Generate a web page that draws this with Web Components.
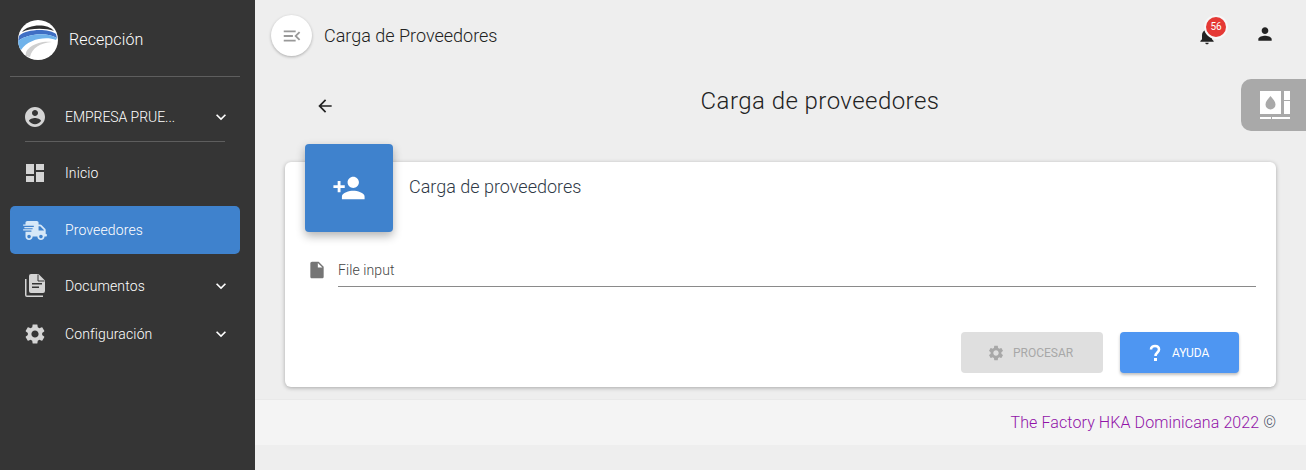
<!DOCTYPE html>
<html lang="es"><head><meta charset="utf-8"><title>Carga de Proveedores</title>
<style>
html,body{margin:0;padding:0;height:470px;overflow:hidden}
body{font-family:Roboto,"Liberation Sans",sans-serif;font-weight:300;background:#eee;color:#222}
</style></head><body>
<app-shell>
  <side-bar slot="side">
    <nav-item icon="account" chevron tight label="EMPRESA PRUE..."></nav-item>
    <hr-line></hr-line>
    <nav-item icon="dashboard" label="Inicio"></nav-item>
    <nav-item icon="truck" active label="Proveedores"></nav-item>
    <nav-item icon="docs" chevron label="Documentos"></nav-item>
    <nav-item icon="gear" chevron label="Configuración"></nav-item>
  </side-bar>
  <top-bar slot="main"></top-bar>
  <page-head slot="main"></page-head>
  <upload-card slot="main"></upload-card>
  <app-footer slot="main"></app-footer>
  <side-tab slot="main"></side-tab>
</app-shell>
<script>
const P={
account:'<path d="M12 2C6.48 2 2 6.48 2 12s4.48 10 10 10 10-4.48 10-10S17.52 2 12 2zm0 3c1.66 0 3 1.34 3 3s-1.34 3-3 3-3-1.34-3-3 1.34-3 3-3zm0 14.2c-2.5 0-4.71-1.28-6-3.22.03-1.99 4-3.08 6-3.08 1.99 0 5.97 1.09 6 3.08-1.29 1.94-3.5 3.22-6 3.22z"/>',
dashboard:'<path d="M3 13h8V3H3v10zm0 8h8v-6H3v6zm10 0h8V11h-8v10zm0-18v6h8V3h-8z"/>',
gear:'<path d="M19.14 12.94c.04-.3.06-.61.06-.94 0-.32-.02-.64-.07-.94l2.03-1.58c.18-.14.23-.41.12-.61l-1.92-3.32c-.12-.22-.37-.29-.59-.22l-2.39.96c-.5-.38-1.03-.7-1.62-.94l-.36-2.54c-.04-.24-.24-.41-.48-.41h-3.84c-.24 0-.43.17-.47.41l-.36 2.54c-.59.24-1.13.57-1.62.94l-2.39-.96c-.22-.08-.47 0-.59.22L2.74 8.87c-.12.21-.08.47.12.61l2.03 1.58c-.05.3-.09.63-.09.94s.02.64.07.94l-2.03 1.58c-.18.14-.23.41-.12.61l1.92 3.32c.12.22.37.29.59.22l2.39-.96c.5.38 1.03.7 1.62.94l.36 2.54c.05.24.24.41.48.41h3.84c.24 0 .44-.17.47-.41l.36-2.54c.59-.24 1.13-.56 1.62-.94l2.39.96c.22.08.47 0 .59-.22l1.92-3.32c.12-.22.07-.47-.12-.61l-2.01-1.58zM12 15.600c-1.98 0-3.6-1.62-3.6-3.6s1.62-3.6 3.6-3.6 3.6 1.62 3.6 3.6-1.62 3.6-3.6 3.6z"/>',
chev:'<path d="M16.59 8.59L12 13.17 7.41 8.59 6 10l6 6 6-6z"/>',
menu:'<path d="M3 18h13v-2H3v2zm0-5h10v-2H3v2zm0-7v2h13V6H3zm18 9.590L17.42 12 21 8.410 19.590 7l-5 5 5 5L21 15.590z"/>',
back:'<path d="M20 11H7.830l5.590-5.590L12 4l-8 8 8 8 1.410-1.410L7.830 13H20v-2z"/>',
bell:'<path d="M12 22c1.100 0 2-.9 2-2h-4c0 1.100.89 2 2 2zm6-6v-5c0-3.070-1.640-5.640-4.500-6.320V4c0-.83-.67-1.500-1.500-1.500s-1.500.67-1.500 1.500v.68C7.630 5.360 6 7.920 6 11v5l-2 2v1h16v-1l-2-2z"/>',
person:'<path d="M12 12c2.210 0 4-1.790 4-4s-1.790-4-4-4-4 1.790-4 4 1.790 4 4 4zm0 2c-2.670 0-8 1.340-8 4v2h16v-2c0-2.660-5.330-4-8-4z"/>',
add:'<path d="M15 12c2.210 0 4-1.790 4-4s-1.790-4-4-4-4 1.790-4 4 1.790 4 4 4zm-9-2V7H4v3H1v2h3v3h2v-3h3v-2H6zm9 4c-2.670 0-8 1.340-8 4v2h16v-2c0-2.660-5.330-4-8-4z"/>',
file:'<path d="M6 2c-1.100 0-1.990.9-1.990 2L4 20c0 1.100.89 2 1.990 2H18c1.100 0 2-.9 2-2V8l-6-6H6zm7 7V3.500L18.500 9H13z"/>'
};
const svg=(n,s,c='currentColor')=>`<svg width="${s}" height="${s}" viewBox="0 0 24 24" fill="${c}" aria-hidden="true" style="display:block;flex:none">${P[n]}</svg>`;
const TRUCK='<svg width="24" height="19" viewBox="0 0 640 512" fill="currentColor" style="display:block;flex:none" aria-hidden="true"><path d="M624 352h-16V243.900c0-12.700-5.100-24.900-14.100-33.900L494 110.100c-9-9-21.200-14.100-33.900-14.100H416V48c0-26.500-21.500-48-48-48H112C85.500 0 64 21.500 64 48v48H8c-4.400 0-8 3.600-8 8v16c0 4.400 3.600 8 8 8h272c4.400 0 8 3.600 8 8v16c0 4.400-3.600 8-8 8H40c-4.400 0-8 3.600-8 8v16c0 4.400 3.600 8 8 8h208c4.400 0 8 3.600 8 8v16c0 4.400-3.600 8-8 8H8c-4.400 0-8 3.600-8 8v16c0 4.400 3.600 8 8 8h208c4.400 0 8 3.600 8 8v16c0 4.400-3.600 8-8 8H64v128c0 53 43 96 96 96s96-43 96-96h128c0 53 43 96 96 96s96-43 96-96h48c8.800 0 16-7.200 16-16v-32c0-8.800-7.200-16-16-16zM160 464c-26.500 0-48-21.500-48-48s21.500-48 48-48 48 21.500 48 48-21.500 48-48 48zm320 0c-26.500 0-48-21.500-48-48s21.500-48 48-48 48 21.500 48 48-21.500 48-48 48zm80-208H416V144h44.100l99.900 99.900V256z"/></svg>';
const DOCS='<svg width="20" height="24" viewBox="0 0 20 24" fill="currentColor" style="display:block;flex:none" aria-hidden="true"><path d="M0 5h1.500v16.500H18V23H2a2 2 0 0 1-2-2z"/><path fill-rule="evenodd" d="M6 0h7.500L20 6.500V17a2 2 0 0 1-2 2H6a2 2 0 0 1-2-2V2a2 2 0 0 1 2-2zM7 9v1.500h10V9zM7 12.500V14h7v-1.500z"/><path d="M13 .5V7h6.500" fill="none" stroke="#353535" stroke-width="1"/></svg>';
function def(name,html,init){customElements.define(name,class extends HTMLElement{
  constructor(){super();this.attachShadow({mode:'open'}).innerHTML=typeof html==='function'?html(this):html;}
  connectedCallback(){if(init)init(this,this.shadowRoot);}
});}

def('app-shell',`<style>:host{display:grid;grid-template-columns:255px 1fr;width:1306px;height:470px;overflow:hidden}
.m{display:flex;flex-direction:column;min-width:0;position:relative;background:#eee}
</style><slot name="side"></slot><div class="m"><slot name="main"></slot></div>`);

def('side-bar',`<style>:host{display:flex;flex-direction:column;background:#353535;height:470px;color:#fff}
.brand{display:flex;align-items:center;gap:11px;margin:0 15px 0 18px;height:76px;padding-top:3px;box-sizing:border-box}
.brand span{font-size:16px;font-weight:350;letter-spacing:.1px}
.rule{height:1px;background:#5e5e5e;margin:0 15px 0 10px}
.list{display:flex;flex-direction:column;padding-top:16px}
</style><div class="brand">
<svg width="40" height="40" viewBox="0 0 40 40" style="flex:none;display:block" aria-hidden="true">
<defs><clipPath id="c"><circle cx="20" cy="20" r="20"/></clipPath></defs>
<g clip-path="url(#c)"><rect width="40" height="40" fill="#fff"/>
<path d="M4 12C10 4 30 3 36 11C28 8 12 8 4 12z" fill="#2e2e2e"/>
<path d="M1 16C8 9 30 8 38 14L39 18C30 12 10 13 0 21z" fill="#3f6fc4"/>
<path d="M0 21C10 13 30 12 39 18L38 20C28 16 10 19 3 30L0 27z" fill="#6fb2ea"/>
<path d="M8 36C6 28 20 20 34 22C22 23 14 28 12 37z" fill="#cfcfcf"/></g></svg>
<span>Recepción</span></div><div class="rule"></div><div class="list"><slot></slot></div>`);

def('hr-line',`<style>:host{display:block;height:1px;background:#5e5e5e;margin:0 30px 7px 25px}</style>`);

def('nav-item',h=>{
 const ic=h.getAttribute('icon'),a=h.hasAttribute('active');
 const icon=ic==='truck'?TRUCK:ic==='docs'?DOCS:svg(ic,24);
 return `<style>:host{display:block;margin:${a?'9px':'0'} 15px ${a?'8px':'0'} 10px}
 .r{display:flex;align-items:center;height:48px;border-radius:5px;color:#fff;font-size:14px;font-weight:300;letter-spacing:${h.hasAttribute('tight')?'-.05px':'.13px'};${a?'background:#3f82cd;':''}}
 .i{width:55px;display:flex;justify-content:center;padding-right:5px;box-sizing:border-box;color:${a?'#d6e8f8':'#d4d4d4'}}
 .t{flex:1;white-space:nowrap}
 .c{width:24px;margin-right:5px;color:#fff}
 </style><div class="r"><div class="i">${icon}</div><div class="t">${h.getAttribute('label')}</div>${h.hasAttribute('chevron')?`<div class="c">${svg('chev',20)}</div>`:''}</div>`;
});

def('top-bar',`<style>:host{display:flex;align-items:center;height:71px;padding:0 31px 0 16px;box-sizing:border-box}
.b{width:41px;height:41px;border-radius:50%;background:#fff;box-shadow:0 1px 3px rgba(0,0,0,.28);display:flex;align-items:center;justify-content:center;color:#999;flex:none}
.t{margin-left:12px;font-size:18px;font-weight:300;color:#222;flex:1}
.bell{position:relative;color:#222;margin-right:38px}
.badge{position:absolute;left:7px;top:-11px;width:20px;height:20px;border-radius:50%;background:#e53935;border:2px solid #f7f7f7;color:#fff;font-size:10px;font-weight:400;display:flex;align-items:center;justify-content:center;line-height:1}
.p{color:#222;margin-top:-4px}
</style><div class="b">${svg('menu',22)}</div><div class="t">Carga de Proveedores</div>
<div class="bell">${svg('bell',20)}<span class="badge">56</span></div><div class="p">${svg('person',20)}</div>`);

def('page-head',`<style>:host{display:flex;align-items:center;height:73px;position:relative;box-sizing:border-box}
.a{margin-left:60px;margin-top:-4px;color:#222;flex:none;padding-top:1px}
h1{margin:-14px 0 0;position:absolute;left:0;right:0;padding-left:79px;text-align:center;font-size:24px;font-weight:300;color:#222;letter-spacing:.45px}
</style><div class="a">${svg('back',20)}</div><h1>Carga de proveedores</h1>`);

def('upload-card',`<style>:host{display:block;margin:18px 30px 0;background:#fff;border-radius:6px;box-shadow:0 1px 4px rgba(0,0,0,.3);height:225px;box-sizing:border-box;padding:0 20px;flex:none}
.h{display:flex;gap:16px}
.ib{width:88px;height:88px;margin-top:-18px;background:#3f82cd;border-radius:4px;box-shadow:0 4px 10px rgba(0,0,0,.3);display:flex;align-items:center;justify-content:center;color:#fff;flex:none}
.ct{font-size:18px;font-weight:300;color:#2f3947;margin-top:14px}
.f{display:flex;align-items:flex-start;margin-top:20px}
.fi{width:33px;color:#757575;flex:none;padding:8px 0 0 2px;box-sizing:border-box}
.ip{flex:1;height:35px;border-bottom:1px solid #8a8a8a;font-size:14px;line-height:36px;color:#444;font-weight:300;letter-spacing:.1px;box-sizing:border-box}
.a{display:flex;justify-content:flex-end;gap:17px;margin-top:45px;margin-right:17px}
.btn{height:41px;border-radius:4px;display:flex;align-items:center;gap:8px;font-size:12px;font-weight:400;box-sizing:border-box}
.d{width:142px;background:#dfdfdf;color:#a8a8a8;padding-left:26px}
.y{width:119px;background:#4e96f2;color:#fff;box-shadow:0 2px 3px rgba(0,0,0,.25);padding-left:25px;gap:7px}
</style><div class="h"><div class="ib">${svg('add',34)}</div><div class="ct">Carga de proveedores</div></div>
<div class="f"><div class="fi">${svg('file',20)}</div><div class="ip">File input</div></div>
<div class="a"><div class="btn d">${svg('gear',18,'#a8a8a8')}<span>PROCESAR</span></div>
<div class="btn y"><svg width="20" height="20" viewBox="0 0 20 20" fill="none" stroke="#fff" stroke-width="2.600" aria-hidden="true" style="display:block;flex:none"><path d="M6 6.500C6 4 8 3 10 3s4 1 4 3.500c0 3-3.500 3-3.500 6.500"/><rect x="9" y="15" width="3" height="3" fill="#fff" stroke="none"/></svg><span>AYUDA</span></div></div>`);

def('app-footer',`<style>:host{display:block;height:46px;margin-top:12px;background:#f4f4f4;border-top:1px solid #e9e9e9;box-sizing:border-box;padding:0 30px;text-align:right;line-height:45px;font-size:16px;font-weight:300;color:#3c4858;flex:none}
b{font-weight:300;color:#9112a8;letter-spacing:.1px}</style><b>The Factory HKA Dominicana 2022</b> ©`);

def('side-tab',`<style>:host{display:flex;position:absolute;right:0;top:79px;width:65px;height:52px;padding-left:3px;box-sizing:border-box;background:#a9a9a9;border-radius:10px 0 0 10px;align-items:center;justify-content:center}</style>
<svg width="30" height="28" viewBox="0 0 30 28" aria-hidden="true" style="display:block"><path fill="#fff" d="M0 0h21v23H0zM24 0h6v9h-6zM24 10h6v13h-6zM0 26h11v2H0zM12 26h18v2H12z"/><path fill="#a9a9a9" d="M10.500 5c2.500 3 5 5.500 5 8.500a5 5 0 0 1-10 0c0-3 2.500-5.500 5-8.500z"/></svg>`);
</script>
</body></html>
